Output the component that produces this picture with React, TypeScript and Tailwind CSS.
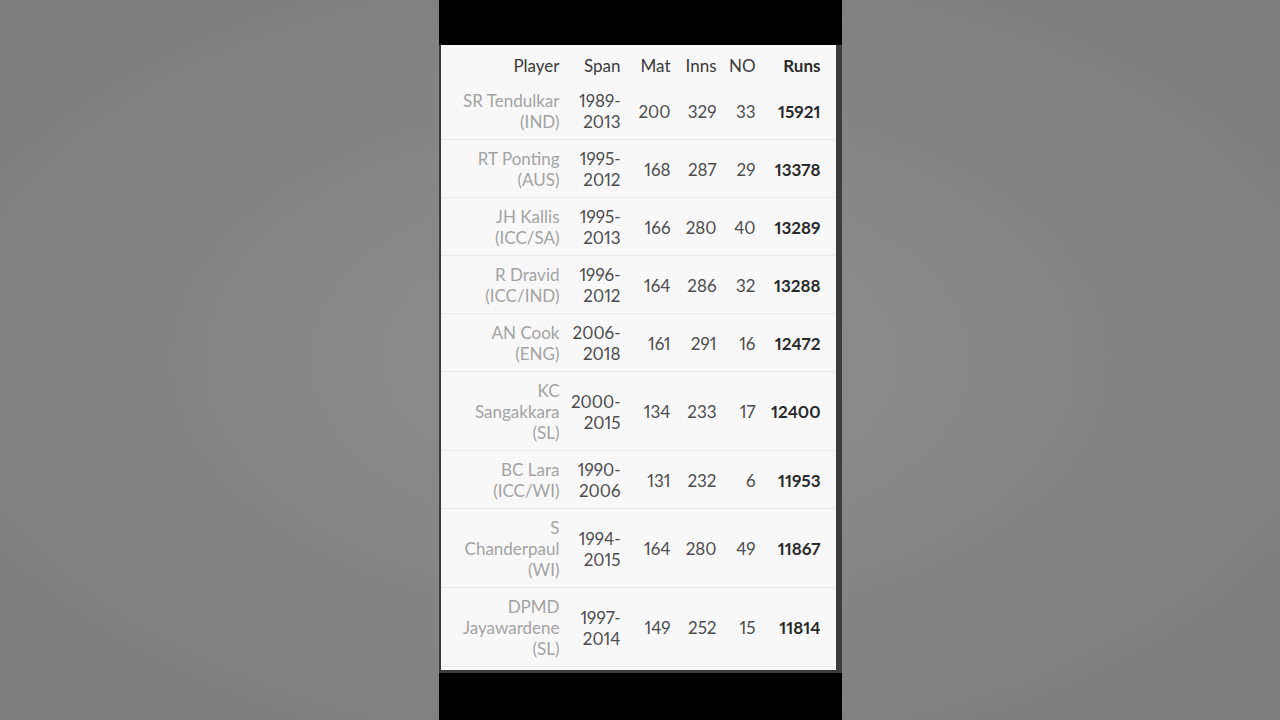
import React from "react";

type Row = { name: string[]; span: string[]; mat: string; inns: string; no: string; runs: string };

const rows: Row[] = [
  { name: ["SR Tendulkar", "(IND)"], span: ["1989-", "2013"], mat: "200", inns: "329", no: "33", runs: "15921" },
  { name: ["RT Ponting", "(AUS)"], span: ["1995-", "2012"], mat: "168", inns: "287", no: "29", runs: "13378" },
  { name: ["JH Kallis", "(ICC/SA)"], span: ["1995-", "2013"], mat: "166", inns: "280", no: "40", runs: "13289" },
  { name: ["R Dravid", "(ICC/IND)"], span: ["1996-", "2012"], mat: "164", inns: "286", no: "32", runs: "13288" },
  { name: ["AN Cook", "(ENG)"], span: ["2006-", "2018"], mat: "161", inns: "291", no: "16", runs: "12472" },
  { name: ["KC", "Sangakkara", "(SL)"], span: ["2000-", "2015"], mat: "134", inns: "233", no: "17", runs: "12400" },
  { name: ["BC Lara", "(ICC/WI)"], span: ["1990-", "2006"], mat: "131", inns: "232", no: "6", runs: "11953" },
  { name: ["S", "Chanderpaul", "(WI)"], span: ["1994-", "2015"], mat: "164", inns: "280", no: "49", runs: "11867" },
  { name: ["DPMD", "Jayawardene", "(SL)"], span: ["1997-", "2014"], mat: "149", inns: "252", no: "15", runs: "11814" },
];

const grid = "grid grid-cols-[119px_61px_50px_46px_39px_65px] items-center text-right";

export default function App() {
  return (
    <div
      className="w-[1280px] h-[720px] flex justify-center bg-[radial-gradient(ellipse_at_center,#8d8d8d_0%,#858585_50%,#7c7c7c_100%)] overflow-hidden"
      style={{ fontFamily: "Lato, 'Open Sans', sans-serif" }}
    >
      <div className="w-[403px] h-[720px] flex flex-col bg-black">
        <div className="h-[45px] shrink-0" />
        <div className="bg-[#3c3c3c] pl-[2px] pr-[6px] pb-[3px] shrink-0">
          <div className="h-[625px] bg-[#f8f8f8] pr-[15px] pt-[1px] text-[17px] leading-[21px] proportional-nums">
            <div className={`${grid} pt-[9px] pb-[6px] text-[#3a3a3a]`}>
              <div>Player</div>
              <div>Span</div>
              <div>Mat</div>
              <div>Inns</div>
              <div>NO</div>
              <div className="font-bold text-[#2a2a2a]">Runs</div>
            </div>
            {rows.map((r, i) => (
              <div
                key={i}
                className={`${grid} pt-[8px] pb-[7px] border-b border-[#ececec] -mr-[15px] pr-[15px]`}
              >
                <div className="text-[#a3a3a3] whitespace-nowrap">
                  {r.name.map((n, j) => (
                    <div key={j}>{n}</div>
                  ))}
                </div>
                <div className="text-[#4d4d4d] whitespace-nowrap">
                  {r.span.map((n, j) => (
                    <div key={j}>{n}</div>
                  ))}
                </div>
                <div className="text-[#4d4d4d]">{r.mat}</div>
                <div className="text-[#4d4d4d]">{r.inns}</div>
                <div className="text-[#4d4d4d]">{r.no}</div>
                <div className="font-bold text-[#2a2a2a]">{r.runs}</div>
              </div>
            ))}
          </div>
        </div>
        <div className="flex-1" />
      </div>
    </div>
  );
}
